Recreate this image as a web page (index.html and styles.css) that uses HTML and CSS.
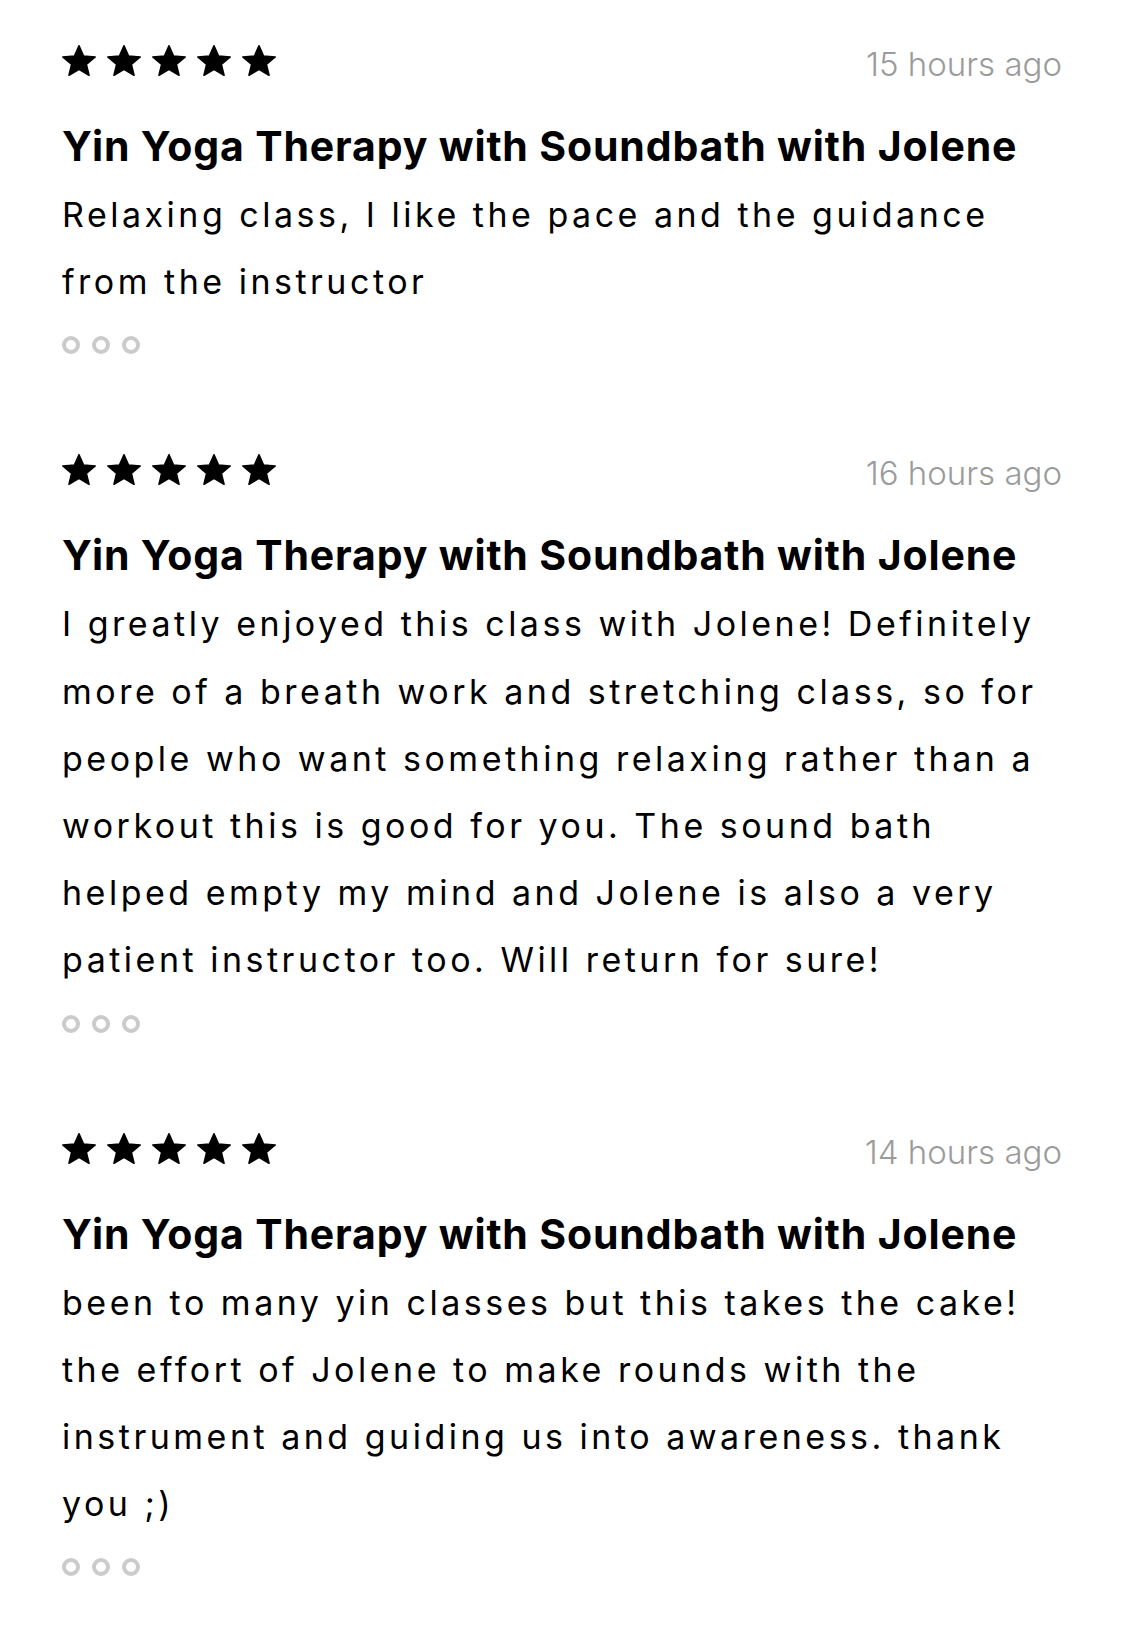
FILE: index.html
```html
<!DOCTYPE html>
<html lang="en">
<head>
<meta charset="utf-8">
<title>Reviews</title>
<link rel="stylesheet" href="styles.css">
</head>
<body>
<svg width="0" height="0" class="defs" aria-hidden="true">
  <defs>
    <symbol id="star" viewBox="1.5 1.5 21 20" preserveAspectRatio="none">
      <path d="M12 17.27L18.18 21l-1.64-7.03L22 9.24l-7.19-.61L12 2 9.19 8.63 2 9.24l5.46 4.73L5.82 21z" fill="#000" stroke="#000" stroke-width="1" stroke-linejoin="round"/>
    </symbol>
  </defs>
</svg>
<main class="reviews">
  <article class="review">
    <div class="review-head">
      <div class="stars">
        <svg class="star"><use href="#star"/></svg>
        <svg class="star"><use href="#star"/></svg>
        <svg class="star"><use href="#star"/></svg>
        <svg class="star"><use href="#star"/></svg>
        <svg class="star"><use href="#star"/></svg>
      </div>
      <span class="time">15 hours ago</span>
    </div>
    <h2 class="title">Yin Yoga Therapy with Soundbath with Jolene</h2>
    <p class="text">Relaxing class, I like the pace and the guidance from the instructor</p>
    <div class="more"><span></span><span></span><span></span></div>
  </article>

  <article class="review">
    <div class="review-head">
      <div class="stars">
        <svg class="star"><use href="#star"/></svg>
        <svg class="star"><use href="#star"/></svg>
        <svg class="star"><use href="#star"/></svg>
        <svg class="star"><use href="#star"/></svg>
        <svg class="star"><use href="#star"/></svg>
      </div>
      <span class="time">16 hours ago</span>
    </div>
    <h2 class="title">Yin Yoga Therapy with Soundbath with Jolene</h2>
    <p class="text">I greatly enjoyed this class with Jolene! Definitely more of a breath work and stretching class, so for people who want something relaxing rather than a workout this is good for you. The sound bath helped empty my mind and Jolene is also a very patient instructor too. Will return for sure!</p>
    <div class="more"><span></span><span></span><span></span></div>
  </article>

  <article class="review">
    <div class="review-head">
      <div class="stars">
        <svg class="star"><use href="#star"/></svg>
        <svg class="star"><use href="#star"/></svg>
        <svg class="star"><use href="#star"/></svg>
        <svg class="star"><use href="#star"/></svg>
        <svg class="star"><use href="#star"/></svg>
      </div>
      <span class="time">14 hours ago</span>
    </div>
    <h2 class="title">Yin Yoga Therapy with Soundbath with Jolene</h2>
    <p class="text">been to many yin classes but this takes the cake! the effort of Jolene to make rounds with the instrument and guiding us into awareness. thank you ;)</p>
    <div class="more"><span></span><span></span><span></span></div>
  </article>
</main>
</body>
</html>
```
FILE: styles.css
```css
html, body {
  margin: 0;
  padding: 0;
  background: #ffffff;
}

body {
  font-family: Inter, Lato, "Noto Sans", "Liberation Sans", sans-serif;
  color: #000;
}

.defs {
  position: absolute;
  width: 0;
  height: 0;
  overflow: hidden;
}

.reviews {
  padding: 45px 62px 0 62px;
  display: flex;
  flex-direction: column;
  gap: 100px;
}

.review {
  display: flex;
  flex-direction: column;
}

.review-head {
  display: flex;
  justify-content: space-between;
  align-items: flex-start;
  height: 31px;
}

.stars {
  display: flex;
  gap: 11px;
}

.star {
  width: 34px;
  height: 31px;
  display: block;
}

.time {
  font-size: 33px;
  font-weight: 300;
  line-height: 31px;
  margin-top: 4px;
  color: #9b9b9b;
  margin-right: 1px;
}

.title {
  margin: 45px 0 0 0;
  font-size: 41px;
  font-weight: 700;
  line-height: 50px;
  letter-spacing: 0.85px;
}

.text {
  margin: 10px 0 0 0;
  font-size: 34px;
  font-weight: 400;
  line-height: 67.2px;
  letter-spacing: 3.5px;
}

.more {
  display: flex;
  gap: 12px;
  margin-top: 21px;
}

.more span {
  width: 18px;
  height: 18px;
  box-sizing: border-box;
  border: 4px solid #cbcbcb;
  border-radius: 50%;
}
```
